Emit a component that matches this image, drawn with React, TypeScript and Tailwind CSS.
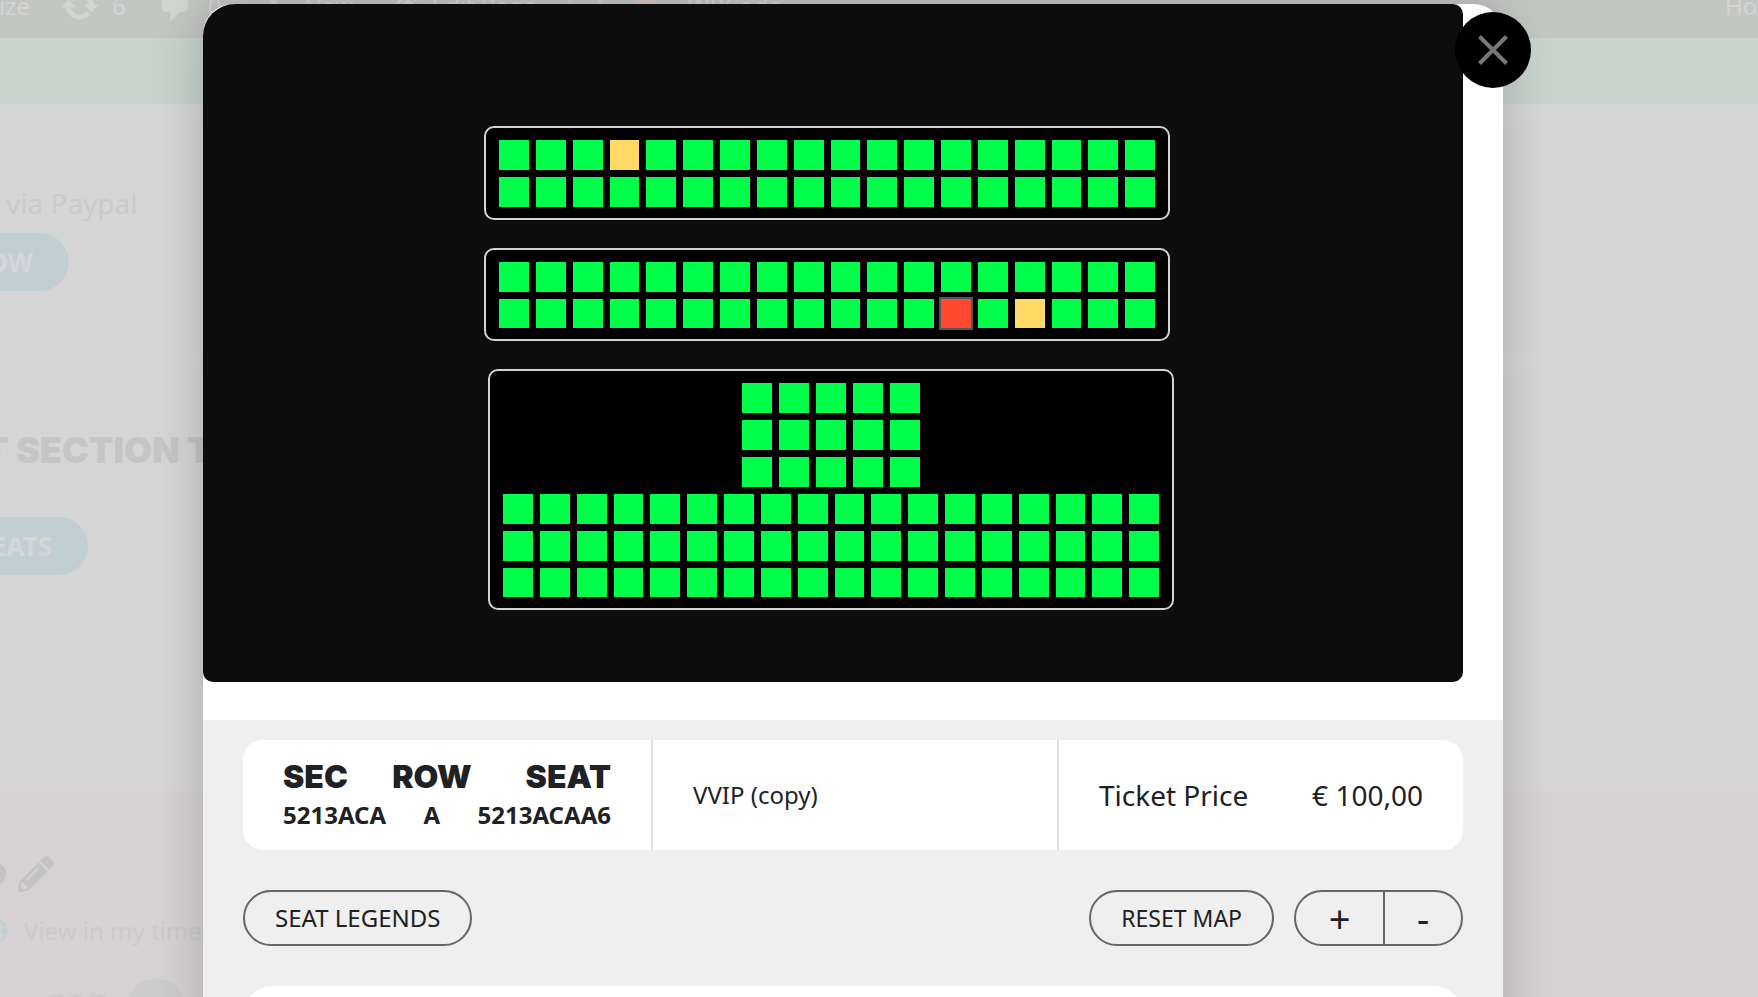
import React from 'react';
import { FaCheck, FaGlobe, FaPencilAlt } from 'react-icons/fa';

type SeatState = 'free' | 'held' | 'selected';

const seatColors: Record<SeatState, string> = {
  free: 'bg-[#00ff4b]',
  held: 'bg-[#ffd966]',
  selected: 'bg-[#ff4930] outline-2 outline-[#555555]',
};

const Seat: React.FC<{ label: string; state?: SeatState }> = ({ label, state = 'free' }) => (
  <button type="button" aria-label={label} className={`aspect-square w-full cursor-pointer ${seatColors[state]}`} />
);

// A rectangular run of seats, numbered from the top left
const SeatRows: React.FC<{
  name: string;
  columns: string;
  count: number;
  special?: Record<number, SeatState>;
}> = ({ name, columns, count, special = {} }) => (
  <div className={`grid gap-[7px] ${columns}`}>
    {Array.from({ length: count }, (_, index) => (
      <Seat key={index} label={`${name} ${index + 1}`} state={special[index]} />
    ))}
  </div>
);

const sectionClass = 'w-full max-w-[686px] rounded-[10px] border-2 border-[#d2d2d2] bg-black px-[13px] pt-3 pb-[11px]';

const AdminBar: React.FC = () => (
  <header className="-mt-[26px] flex h-16 items-center justify-between overflow-hidden bg-[#c4c6c4] text-2xl whitespace-nowrap text-[#d3d5d3]">
    <div className="flex items-center gap-[30px]">
      <div className="flex w-[30px] justify-end">Customize</div>
      <div className="flex items-center gap-3">
        <svg viewBox="0 0 20 20" className="size-10 fill-current">
          <path d="M10.2 3.28c3.53 0 6.43 2.61 6.92 6h2.08l-3.5 4-3.5-4h2.32c-.45-1.97-2.21-3.45-4.32-3.45-1.45 0-2.73.71-3.54 1.78L4.95 5.66C6.23 4.2 8.11 3.28 10.2 3.28zm-.4 13.44c-3.52 0-6.43-2.61-6.92-6H.8l3.5-4c1.17 1.33 2.33 2.67 3.5 4H5.48c.45 1.97 2.21 3.45 4.32 3.45 1.45 0 2.73-.71 3.54-1.78l1.71 1.95c-1.28 1.46-3.15 2.38-5.25 2.38z" />
        </svg>
        <span>6</span>
      </div>
      <div className="flex items-center gap-3">
        <svg viewBox="0 0 20 20" className="size-10 fill-current">
          <path d="M5 2h9c1.1 0 2 .9 2 2v7c0 1.1-.9 2-2 2h-2l-5 5v-5H5c-1.1 0-2-.9-2-2V4c0-1.1.9-2 2-2z" />
        </svg>
        <span>0</span>
      </div>
      <div className="flex items-center gap-3 pl-1">
        <svg viewBox="0 0 20 20" className="size-9 fill-current">
          <path d="M9 2h3v7h6v3h-6v6H9v-6H2V9h7z" />
        </svg>
        <span>New</span>
      </div>
      <div className="flex items-center gap-3">
        <FaPencilAlt className="size-9" />
        <span>Edit Page</span>
      </div>
      <span className="size-9 rounded-full border-4 border-[#cccecc]" />
      <span className="size-6 rounded-full bg-[#d6c4c4]" />
      <span>WPCode</span>
    </div>
    <span className="w-[33px]">Howdy</span>
  </header>
);

const PageBehind: React.FC = () => (
  <div className="flex min-h-screen flex-col overflow-hidden bg-[#d5d5d5]">
    <AdminBar />
    <div className="h-[66px] bg-[#c7d3cd]" />
    <div className="h-5 bg-[#d6d6d6]" />

    <section className="h-[228px] pt-[59px]">
      <p className="pl-[6px] text-[28px] leading-10 text-[#cacaca]">via Paypal</p>
      <div className="flex w-[69px] justify-end pt-[10px]">
        <button type="button" className="h-[58px] shrink-0 rounded-full bg-[#c1cfd5] px-9 text-[26px] font-bold text-[#d5d6d7]">
          NOW
        </button>
      </div>
    </section>
    <div className="h-5 bg-[#d6d6d6]" />

    <section className="h-[342px] pt-[54px]">
      <h2 className="-ml-4 font-[Inter] text-4xl leading-[48px] font-black whitespace-nowrap text-[#c5c5c5]">T SECTION T</h2>
      <div className="flex w-[88px] justify-end pt-[43px]">
        <button type="button" className="h-[58px] shrink-0 rounded-full bg-[#c1cfd5] px-9 text-[26px] font-bold text-[#d5d6d7]">
          SEATS
        </button>
      </div>
    </section>
    <div className="h-[77px] bg-[#d4d5d4]" />

    <section className="grow bg-[#d6d2d4] pt-[65px] text-2xl text-[#cacaca]">
      <div className="flex h-9 items-center gap-3 text-[#c2c3c2]">
        <span className="-ml-[18px] size-6 rounded-full bg-current" />
        <FaPencilAlt className="size-9" />
      </div>
      <div className="flex items-center gap-4 pt-[23px] whitespace-nowrap">
        <FaGlobe className="-ml-4 size-6 shrink-0 text-[#bfd0d2]" />
        <span>View in my time</span>
      </div>
      <div className="flex items-center gap-5 pt-8 pl-[50px] font-bold">
        <span>RSVP</span>
        <span className="flex h-12 w-[54px] shrink-0 items-center justify-center rounded-full bg-[#cccccc] text-[#d4d4d4]">
          <FaCheck className="size-5" />
        </span>
      </div>
    </section>
  </div>
);

const SeatMap: React.FC = () => (
  <div className="mr-10 flex flex-col items-center gap-7 rounded-[10px] rounded-tl-[32px] bg-[#0d0d0d] pt-[122px] pr-3 pb-[72px]">
    <div className={sectionClass}>
      <SeatRows name="Upper seat" columns="grid-cols-18" count={36} special={{ 3: 'held' }} />
    </div>
    <div className={sectionClass}>
      <SeatRows name="Middle seat" columns="grid-cols-18" count={36} special={{ 30: 'selected', 32: 'held' }} />
    </div>
    <div className={`${sectionClass} ml-2 flex flex-col gap-[7px]`}>
      <div className="mx-auto w-[27%]">
        <SeatRows name="Box seat" columns="grid-cols-5" count={15} />
      </div>
      <SeatRows name="Lower seat" columns="grid-cols-18" count={54} />
    </div>
  </div>
);

const SeatDetails: React.FC = () => {
  const fields = [
    { name: 'SEC', value: '5213ACA', align: 'text-left' },
    { name: 'ROW', value: 'A', align: 'text-center' },
    { name: 'SEAT', value: '5213ACAA6', align: 'text-right' },
  ];

  return (
    <div className="grid min-h-[110px] grid-cols-[410fr_406fr_404fr] rounded-[20px] bg-white">
      <dl className="flex items-center justify-between border-r-2 border-[#dee2e6] px-10">
        {fields.map((field) => (
          <div key={field.name} className={field.align}>
            <dt className="font-[Inter] text-[32px] leading-10 font-black">{field.name}</dt>
            <dd className="text-2xl leading-9 font-bold">{field.value}</dd>
          </div>
        ))}
      </dl>
      <div className="flex items-center border-r-2 border-[#dee2e6] px-10 text-2xl">VVIP (copy)</div>
      <div className="flex items-center justify-between px-10 text-[28px]">
        <span>Ticket Price</span>
        <span>€ 100,00</span>
      </div>
    </div>
  );
};

const MapControls: React.FC = () => (
  <div className="flex items-center justify-between">
    <button type="button" className="h-14 rounded-full border-2 border-[#666666] px-[30px] text-2xl">
      SEAT LEGENDS
    </button>
    <div className="flex gap-5">
      <button type="button" className="h-14 rounded-full border-2 border-[#666666] px-[30px] text-[23px]">
        RESET MAP
      </button>
      <div className="flex h-14 w-[169px] overflow-hidden rounded-full border-2 border-[#666666] text-[38px] leading-[52px]">
        <button type="button" className="grow border-r-2 border-[#666666]">+</button>
        <button type="button" className="w-[76px]">-</button>
      </div>
    </div>
  </div>
);

const App: React.FC = () => {
  return (
    <div className="relative h-screen overflow-hidden font-['Noto_Sans',sans-serif] text-[#202124]">
      <PageBehind />

      <div className="absolute inset-0 pt-1 pr-[52px]">
        <div
          role="dialog"
          aria-label="Seat details"
          className="relative mx-auto flex min-h-full w-full max-w-[1300px] flex-col rounded-t-[30px] bg-white shadow-[0_0_50px_rgba(0,0,0,0.2)]"
        >
          <button
            type="button"
            aria-label="Close"
            className="absolute top-2 -right-7 flex size-[76px] items-center justify-center rounded-full bg-black"
          >
            <svg viewBox="0 0 30 30" className="size-[30px] stroke-[#777777]" strokeWidth="4" fill="none">
              <path d="M1.5 1.5l27 27M28.5 1.5l-27 27" />
            </svg>
          </button>

          <SeatMap />

          <div className="mt-[38px] flex grow flex-col gap-10 bg-[#efefef] px-10 pt-5">
            <SeatDetails />
            <MapControls />
            <div className="min-h-20 rounded-t-[30px] bg-white" />
          </div>
        </div>
      </div>
    </div>
  );
};

export default App;
